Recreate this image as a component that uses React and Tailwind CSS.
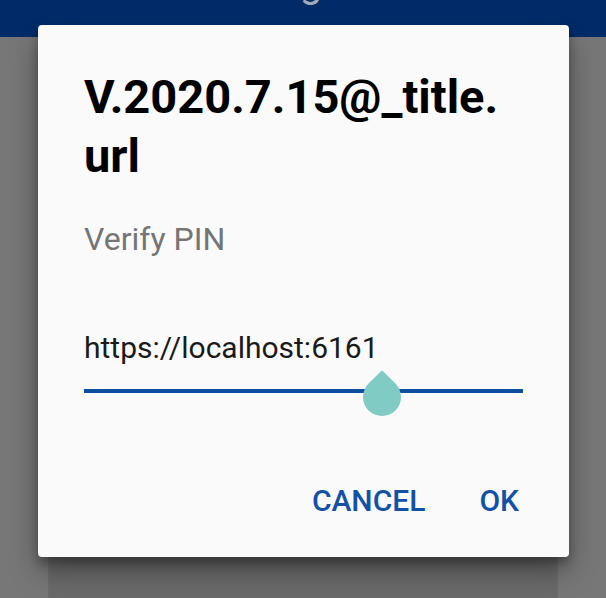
import React from 'react';

// ── Slider ─────────────────────────────────────────────────────────────────────
const PinSlider = () => (
  <div className="relative mt-[3px] flex h-[44px] items-center">
    <div className="h-[4px] w-full bg-[#0f4d9f]" />
    <div className="absolute left-[279px] top-[9px] h-[38px] w-[38px] rotate-45 rounded-[0_50%_50%_50%] bg-[#80cbc4]" />
  </div>
);

function App() {
  return (
    <div className="relative h-[598px] w-[606px] overflow-hidden bg-[#777777] font-['Roboto',sans-serif]">
      <header className="flex h-[37px] justify-center overflow-hidden bg-[#002b69]">
        <span className="-mt-[40px] ml-[16px] text-[40px] leading-[48px] text-[#a3a9b5]">g</span>
      </header>

      <div className="mx-[48px] mt-[30px] h-[560px] border-x border-[#6d6d6d] bg-[#6a6a6a]" />

      <div className="absolute left-[38px] top-[25px] flex h-[532px] w-[531px] flex-col rounded-[4px] bg-[#fafafa] px-[46px] pt-[42px] shadow-[0_14px_28px_rgba(0,0,0,0.35),0_6px_10px_rgba(0,0,0,0.25)]">
        <h2 className="text-[47px] font-bold leading-[59px] text-black">
          V.2020.7.15@_title.
          <br />
          url
        </h2>

        <p className="mt-[34px] text-[32px] leading-[40px] text-[#757575]">Verify PIN</p>

        <p className="mt-[71px] text-[30px] leading-[36px] text-[#1a1a1a]">https://localhost:6161</p>

        <PinSlider />

        <div className="mt-[70px] flex justify-end gap-[54px] pr-[4px] text-[30px] font-medium leading-[36px] text-[#1151a6]">
          <button>CANCEL</button>
          <button>OK</button>
        </div>
      </div>
    </div>
  );
}

export default App;
